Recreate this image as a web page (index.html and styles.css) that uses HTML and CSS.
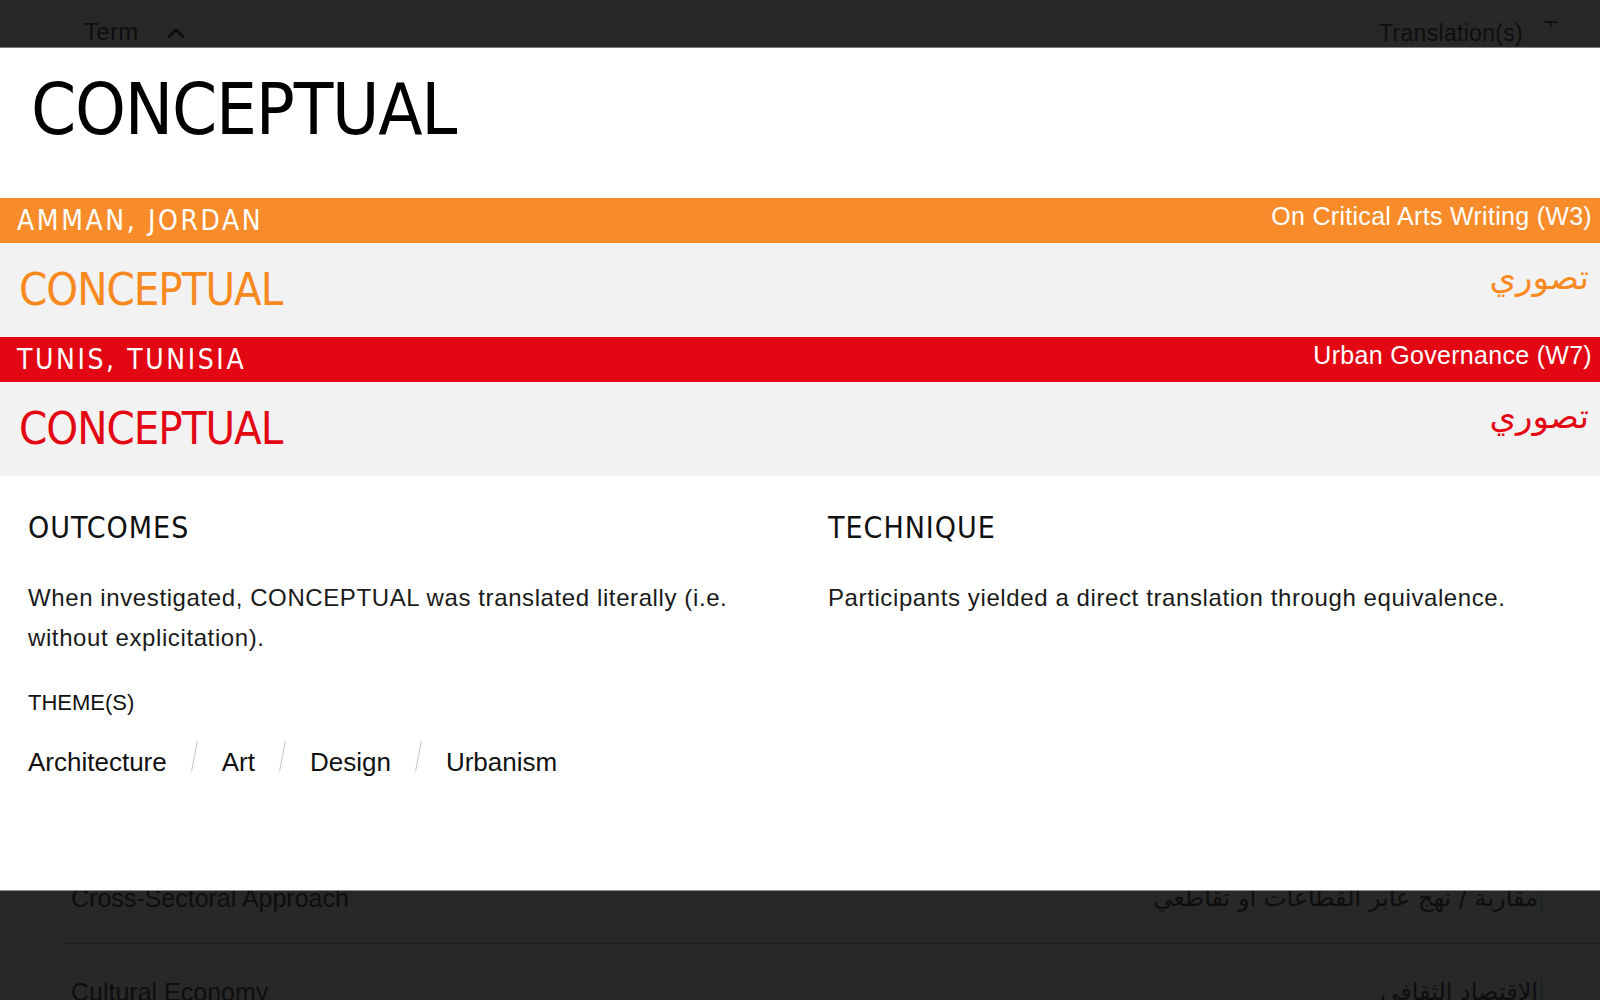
FILE: index.html
```html
<!DOCTYPE html>
<html lang="en">
  <head>
    <meta charset="utf-8">
    <title>Conceptual - Glossary</title>
    <meta name="viewport" content="width=device-width, initial-scale=1">
    <link rel="stylesheet" href="styles.css">
  </head>
<body>

	<!-- glossary list behind the popup -->
	<div class="list">
		<div class="list-head">
			<div class="head-term">
				Term
				<svg class="sort-up" width="20" height="11" viewBox="0 0 20 11">
					<path d="M2 9.5 L10 2 L18 9.5" fill="none" stroke="#0e0e0e" stroke-width="3"/>
				</svg>
			</div>
			<div class="head-trans">
				Translation(s)
				<svg class="sort-mark" width="14" height="7" viewBox="0 0 14 7">
					<path d="M0 1 H14 M7 1 V6" fill="none" stroke="#0e0e0e" stroke-width="1.5"/>
				</svg>
			</div>
		</div>
		<div class="list-body">
			<div class="list-row">
				<span class="row-term">Cross-Sectoral Approach</span>
				<span class="row-trans" lang="ar" dir="rtl">مقاربة / نهج عابر القطاعات او تقاطعي</span>
			</div>
			<div class="list-row">
				<span class="row-term">Cultural Economy</span>
				<span class="row-trans" lang="ar" dir="rtl">الاقتصاد الثقافي</span>
			</div>
		</div>
	</div>

	<!-- term popup -->
	<div class="entry">
		<h1 class="entry-title">CONCEPTUAL</h1>

		<div class="city city-amman">
			<span class="city-name">Amman, Jordan</span>
			<span class="city-workshop">On Critical Arts Writing (W3)</span>
		</div>
		<div class="term-row term-amman">
			<span class="term-en">CONCEPTUAL</span>
			<span class="term-ar" lang="ar" dir="rtl">تصوري</span>
		</div>

		<div class="city city-tunis">
			<span class="city-name">Tunis, Tunisia</span>
			<span class="city-workshop">Urban Governance (W7)</span>
		</div>
		<div class="term-row term-tunis">
			<span class="term-en">CONCEPTUAL</span>
			<span class="term-ar" lang="ar" dir="rtl">تصوري</span>
		</div>

		<div class="details">
			<div class="details-col">
				<h2>OUTCOMES</h2>
				<p>When investigated, CONCEPTUAL was translated literally (i.e. without explicitation).</p>
				<h3>THEME(S)</h3>
				<ul class="themes">
					<li>Architecture</li>
					<li>Art</li>
					<li>Design</li>
					<li>Urbanism</li>
				</ul>
			</div>
			<div class="details-col">
				<h2>TECHNIQUE</h2>
				<p>Participants yielded a direct translation through equivalence.</p>
			</div>
		</div>
	</div>

</body>
</html>
```

FILE: styles.css
```css
* {
    padding: 0;
    margin: 0;
    box-sizing: border-box;
}
html, body {
    height: 100%;
    overflow: hidden;
}
body {
    position: relative;
    background: #282828;
    color: #0e0e0e;
    font-family: "Liberation Sans", Arial, sans-serif;
}

/* list behind */
.list-head {
    height: 47px;
    display: flex;
    justify-content: space-between;
    align-items: flex-start;
}
.head-term {
    padding: 20px 0 0 84px;
    font-size: 24px;
    line-height: 24px;
    letter-spacing: .3px;
}
.sort-up {
    margin-left: 20px;
    vertical-align: 1px;
}
.head-trans {
    display: flex;
    align-items: flex-start;
    gap: 21px;
    padding: 21px 42px 0 0;
    font-size: 23px;
    line-height: 25px;
    letter-spacing: .3px;
}
.list-body {
    padding-top: 803px;
}
.list-row {
    height: 94px;
    margin-left: 62px;
    padding: 34px 58px 0 9px;
    display: flex;
    justify-content: space-between;
    align-items: flex-start;
    border-bottom: 1px solid #1e1e1e;
    font-size: 25px;
    line-height: 28px;
}
.row-trans {
    font-family: "DejaVu Sans", sans-serif;
    font-size: 24px;
    border-right: 1px solid #0c2a12;
    padding-right: 3px;
}

/* popup */
.entry {
    position: absolute;
    top: 47px;
    left: 0;
    right: 0;
    height: 844px;
    background: #fff;
    border-top: 1px solid #7c7c7c;
    border-bottom: 1px solid #8c8c8c;
    color: #111;
}
.entry-title,
.city-name,
.term-en,
.details h2 {
    font-family: "DejaVu Sans Condensed", "DejaVu Sans", sans-serif;
    font-stretch: condensed;
    font-weight: normal;
}
.entry-title {
    height: 150px;
    padding: 25px 31px 0;
    font-size: 72px;
    line-height: 72px;
    letter-spacing: -1.2px;
    color: #000;
}
.city {
    height: 45px;
    padding: 0 8px 0 17px;
    display: flex;
    justify-content: space-between;
    align-items: flex-start;
    color: #fff;
}
.city-amman {
    background: #f98c2a;
}
.city-tunis {
    background: #e30613;
}
.city-name {
    padding-top: 8px;
    font-size: 28px;
    line-height: 29px;
    letter-spacing: 2.6px;
    text-transform: uppercase;
}
.city-workshop {
    padding-top: 5px;
    font-size: 25px;
    line-height: 27px;
    letter-spacing: .3px;
}
.term-row {
    height: 94px;
    padding: 0 11px 0 19px;
    display: flex;
    justify-content: space-between;
    align-items: flex-start;
    background: #f2f2f2;
}
.term-amman {
    color: #f7891f;
}
.term-tunis {
    color: #e30613;
}
.term-en {
    padding-top: 24px;
    font-size: 45px;
    line-height: 45px;
    letter-spacing: -1px;
}
.term-ar {
    padding-top: 14px;
    font-family: "DejaVu Sans", sans-serif;
    font-size: 34px;
    line-height: 40px;
}

.details {
    display: grid;
    grid-template-columns: 1fr 1fr;
    padding-top: 36px;
}
.details-col {
    padding: 0 28px;
}
.details h2 {
    font-size: 30px;
    line-height: 32px;
    letter-spacing: 1px;
}
.details p {
    margin-top: 34px;
    font-size: 24px;
    line-height: 40px;
    letter-spacing: .6px;
    color: #1a1a1a;
}
.details h3 {
    margin-top: 33px;
    font-size: 22px;
    line-height: 24px;
    font-weight: normal;
}
.themes {
    margin-top: 26px;
    list-style: none;
    display: flex;
    align-items: baseline;
    font-size: 26px;
    line-height: 28px;
}
.themes li + li::before {
    content: "";
    display: inline-block;
    width: 1px;
    height: 30px;
    margin: 0 27px;
    background: #c4c4c4;
    transform: skewX(-11deg);
}
```
